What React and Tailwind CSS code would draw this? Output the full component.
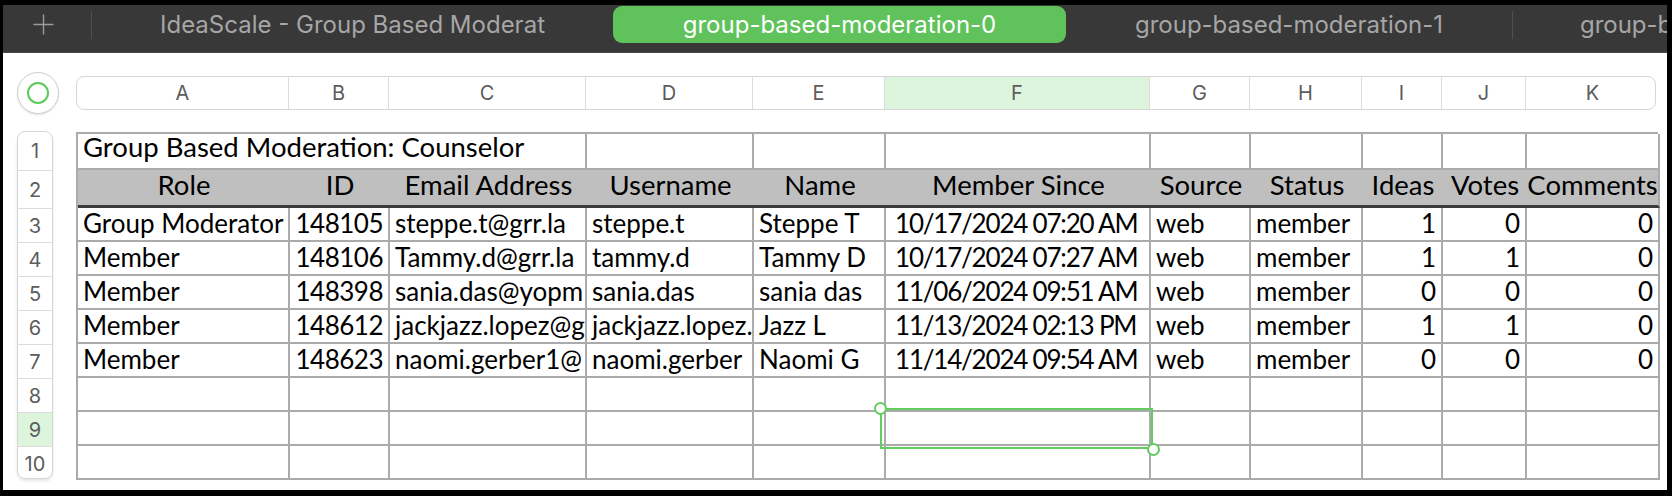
import React from "react";

const COLS = ["A", "B", "C", "D", "E", "F", "G", "H", "I", "J", "K"];
const GRID =
  "grid grid-cols-[212px_100px_197px_167px_132px_265px_100px_112px_80px_84px_133px]";

const headers = ["Role", "ID", "Email Address", "Username", "Name", "Member Since", "Source", "Status", "Ideas", "Votes", "Comments"];

const rows = [
  ["Group Moderator", "148105", "steppe.t@grr.la", "steppe.t", "Steppe T", "10/17/2024 07:20 AM", "web", "member", "1", "0", "0"],
  ["Member", "148106", "Tammy.d@grr.la", "tammy.d", "Tammy D", "10/17/2024 07:27 AM", "web", "member", "1", "1", "0"],
  ["Member", "148398", "sania.das@yopm", "sania.das", "sania das", "11/06/2024 09:51 AM", "web", "member", "0", "0", "0"],
  ["Member", "148612", "jackjazz.lopez@g", "jackjazz.lopez.", "Jazz L", "11/13/2024 02:13 PM", "web", "member", "1", "1", "0"],
  ["Member", "148623", "naomi.gerber1@", "naomi.gerber", "Naomi G", "11/14/2024 09:54 AM", "web", "member", "0", "0", "0"],
];

const cellExtra = [
  "text-left",
  "text-right tracking-[-0.5px]",
  "text-left",
  "text-left",
  "text-left",
  "text-left pl-[9px] tracking-[-1.2px]",
  "text-left",
  "text-left",
  "text-right",
  "text-right",
  "text-right",
];

function PlusIcon() {
  return (
    <svg width="21" height="21" viewBox="0 0 21 21" fill="none">
      <path d="M10.5 1V20M1 10.5H20" stroke="#9a9a9a" strokeWidth="1.4" strokeLinecap="round" />
    </svg>
  );
}

export default function App() {
  return (
    <div className="w-[1672px] h-[496px] bg-black pt-[5px] pl-[3px] pr-[5px] pb-[6px] flex flex-col overflow-hidden">
      {/* Tab bar */}
      <div className="h-[48px] shrink-0 bg-[#383838] border-b border-[#4a4a4a] flex items-start overflow-hidden font-[Inter,sans-serif] text-[24px] text-[#a6a6a6]">
        <div className="w-[88px] h-[37px] mt-[1px] shrink-0 flex items-center pl-[30px]">
          <PlusIcon />
        </div>
        <div className="w-px h-[28px] mt-[6px] bg-[#505050] shrink-0" />
        <div className="w-[521px] h-[37px] mt-[1px] shrink-0 flex items-center justify-center whitespace-nowrap overflow-hidden">
          IdeaScale - Group Based Moderat
        </div>
        <div className="w-[453px] h-[37px] mt-[1px] shrink-0 rounded-[9px] bg-[#5fc25b] text-white flex items-center justify-center whitespace-nowrap">
          group-based-moderation-0
        </div>
        <div className="w-[446px] h-[37px] mt-[1px] shrink-0 flex items-center justify-center whitespace-nowrap">
          group-based-moderation-1
        </div>
        <div className="w-px h-[28px] mt-[6px] bg-[#505050] shrink-0" />
        <div className="w-[446px] h-[37px] mt-[1px] shrink-0 flex items-center justify-center whitespace-nowrap">
          group-based-moderation-2
        </div>
      </div>

      {/* Sheet */}
      <div className="relative flex-1 bg-white pl-[14px] pt-[19px]">
        {/* Column header row */}
        <div className="flex items-center gap-[17px] h-[42px]">
          <div className="w-[42px] h-[42px] shrink-0 rounded-full border border-[#cfcfcf] bg-white shadow-[0_1px_2px_rgba(0,0,0,0.12)] flex items-center justify-center">
            <div className="w-[22px] h-[22px] rounded-full border-2 border-[#5cc95a]" />
          </div>
          <div className={`${GRID} w-[1580px] h-[34px] rounded-[8px] border border-[#d6d6d6] overflow-hidden font-[Inter,sans-serif] text-[20px] text-[#5c5c5c]`}>
            {COLS.map((c, i) => (
              <div
                key={c}
                className={`flex items-center justify-center ${i < 10 ? "border-r border-[#dcdcdc]" : ""} ${c === "F" ? "bg-[#dcf5dc]" : ""}`}
              >
                {c}
              </div>
            ))}
          </div>
        </div>

        {/* Body */}
        <div className="flex gap-[23px] mt-[17px]">
          {/* Row headers */}
          <div className="w-[36px] shrink-0 rounded-[8px] border border-[#d6d6d6] overflow-hidden shadow-[0_2px_3px_rgba(0,0,0,0.1)] font-[Inter,sans-serif] text-[20px] text-[#5c5c5c] flex flex-col h-[348px]">
            {[1, 2, 3, 4, 5, 6, 7, 8, 9, 10].map((n) => (
              <div
                key={n}
                className={`flex items-center justify-center shrink-0 ${n < 10 ? "border-b border-[#dcdcdc]" : ""} ${n === 1 ? "h-[39px]" : n === 2 ? "h-[38px]" : "h-[34px]"} ${n === 9 ? "bg-[#dcf5dc]" : ""}`}
              >
                {n}
              </div>
            ))}
          </div>

          {/* Table */}
          <div className={`${GRID} mt-[1px] w-[1582px] border-l-2 border-t-2 border-[#ababab] font-[Lato,sans-serif] text-[26px] text-black self-start`}>
            {/* Row 1 */}
            <div className="col-span-3 h-[36px] border-r-2 border-b-2 border-[#ababab] px-[5px] text-[27.5px] leading-[26px] whitespace-nowrap overflow-hidden">
              Group Based Moderation: Counselor
            </div>
            {Array.from({ length: 8 }).map((_, i) => (
              <div key={i} className="h-[36px] border-r-2 border-b-2 border-[#ababab]" />
            ))}

            {/* Row 2 headers */}
            {headers.map((h, i) => (
              <div
                key={h}
                className={`h-[38px] bg-[#bfbfbf] border-b-[3px] border-b-[#3a3a3a] ${i === 10 ? "border-r-2 border-r-[#ababab]" : ""} text-center text-[27.5px] leading-[29px] whitespace-nowrap overflow-visible`}
              >
                {h}
              </div>
            ))}

            {/* Data rows */}
            {rows.map((r, ri) =>
              r.map((v, ci) => (
                <div
                  key={ri + "-" + ci}
                  className={`h-[34px] border-r-2 border-b-2 border-[#ababab] px-[5px] leading-[31px] whitespace-nowrap overflow-hidden ${cellExtra[ci]}`}
                >
                  {v}
                </div>
              ))
            )}

            {/* Empty rows */}
            {Array.from({ length: 33 }).map((_, i) => (
              <div key={"e" + i} className="h-[34px] border-r-2 border-b-2 border-[#ababab]" />
            ))}
          </div>
        </div>

        {/* Selection overlay */}
        <div className="absolute left-[877px] top-[355px] w-[273px] h-[41px] border-2 border-[#63cc5f] pointer-events-none" />
        <div className="absolute left-[871px] top-[349px] w-[13px] h-[13px] rounded-full bg-white border-2 border-[#63cc5f]" />
        <div className="absolute left-[1144px] top-[390px] w-[13px] h-[13px] rounded-full bg-white border-2 border-[#63cc5f]" />
      </div>
    </div>
  );
}
